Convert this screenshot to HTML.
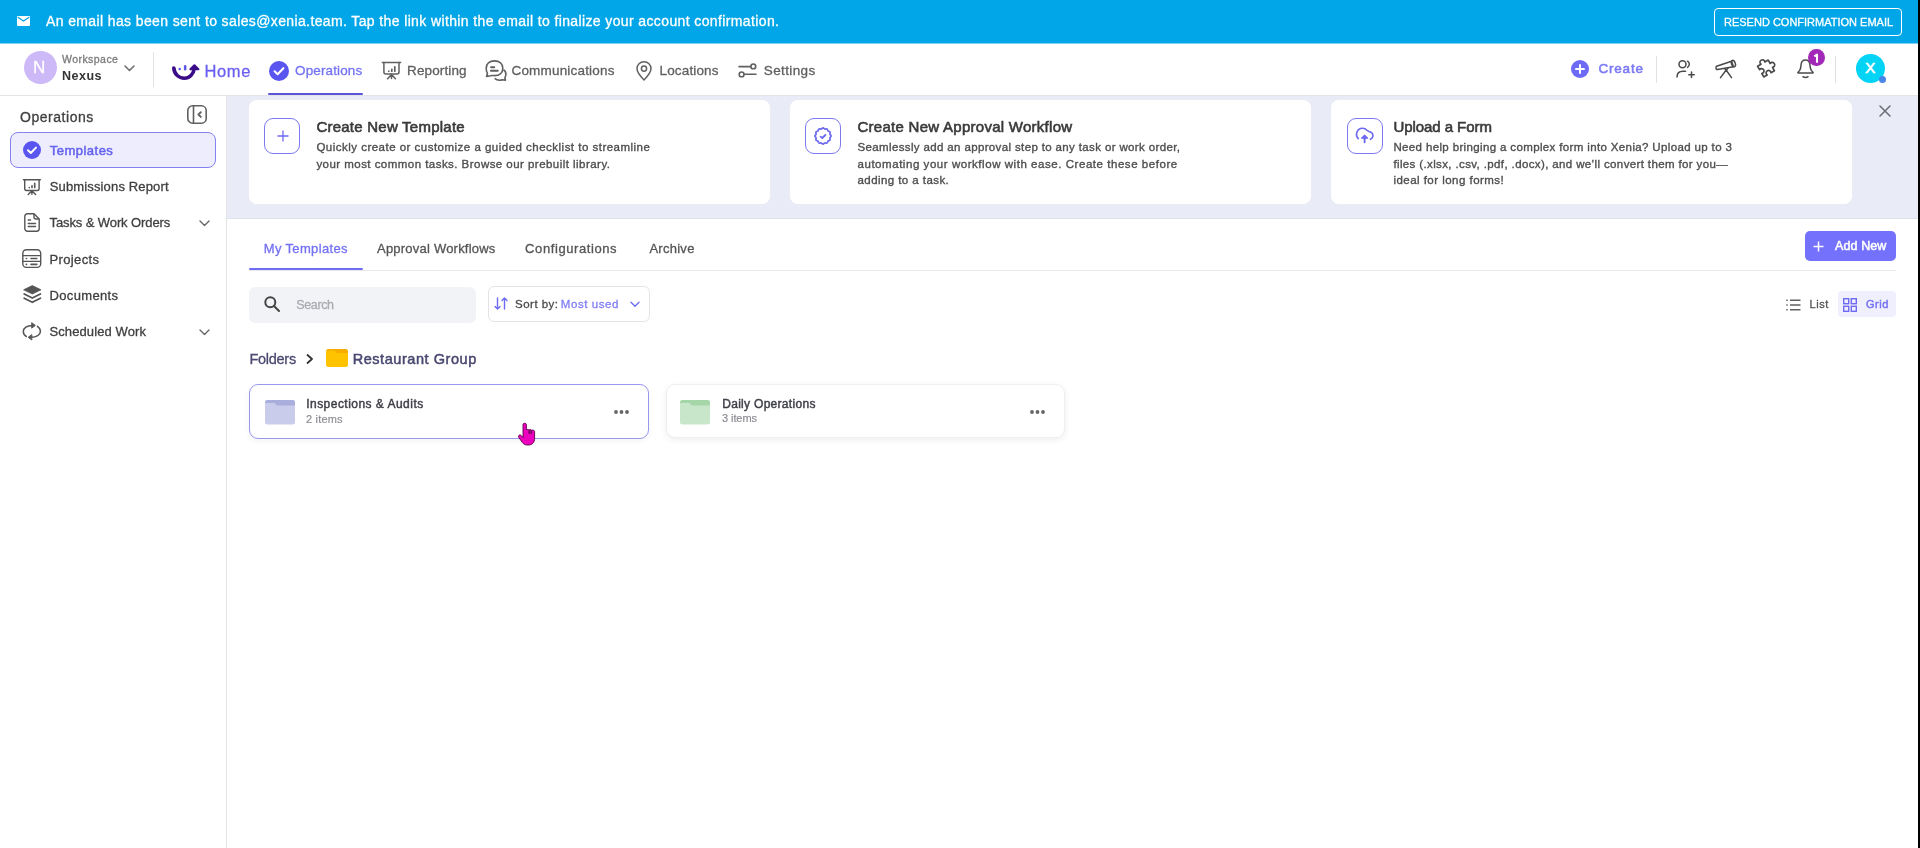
<!DOCTYPE html>
<html><head><meta charset="utf-8">
<style>
*{box-sizing:border-box;margin:0;padding:0}
html,body{width:1920px;height:848px;overflow:hidden;background:#fff;font-family:"Liberation Sans",sans-serif;}
.a{position:absolute}
.t{position:absolute;line-height:1;white-space:nowrap;-webkit-text-stroke:0.3px currentColor}
svg{position:absolute;overflow:visible}
#banner{left:0;top:0;width:1918px;height:44px;background:linear-gradient(#01A6E8 0,#01A6E8 43px,#80D2F3 43px)}
#strip{left:1918px;top:0;width:2px;height:848px;background:#000}
#header{left:0;top:43px;width:1918px;height:53px;background:#fff;border-bottom:1px solid #E4E4E6}
#sidebar{left:0;top:96px;width:227px;height:752px;background:#fff;border-right:1px solid #E4E4E6}
#topgray{left:227px;top:96px;width:1691px;height:123px;background:#E9ECF6;border-bottom:1px solid #DFE2EA}
.card{position:absolute;top:100px;height:104px;background:#fff;border-radius:8px}
.ibox{position:absolute;top:117.8px;width:36px;height:36px;border:1.5px solid #7D7AF0;border-radius:9px}
.ttl{font-size:15px;-webkit-text-stroke:0.6px currentColor;color:#3A3A3A;top:119px}
.desc{position:absolute;-webkit-text-stroke:0.35px currentColor;top:139.3px;font-size:11.5px;line-height:16.4px;color:#4E4E4E;white-space:nowrap;letter-spacing:0.45px}
.nav{font-size:13.5px;color:#606060;top:63.9px}
.side{font-size:13px;color:#404040}
.tab{font-size:13px;color:#555;top:241.8px}
</style></head>
<body>
<div id="root" style="position:absolute;left:0;top:0;width:1920px;height:848px;filter:blur(0.4px)">
<div class="a" id="header"></div>
<div class="a" id="banner"></div>
<div class="a" id="sidebar"></div>
<div class="a" id="topgray"></div>
<div class="a" id="strip"></div>

<!-- banner -->
<svg style="left:17px;top:16px" width="13" height="10" viewBox="0 0 13 10"><rect x="0" y="0" width="13" height="10" rx="1" fill="#fff"/><path d="M0.8 1.2 L6.5 5 L12.2 1.2" stroke="#01A6E8" stroke-width="1.3" fill="none"/></svg>
<div class="t" style="left:46px;top:13.7px;font-size:14px;letter-spacing:0.378px;color:#fff">An email has been sent to sales@xenia.team. Tap the link within the email to finalize your account confirmation.</div>
<div class="a" style="left:1714px;top:8px;width:188px;height:28px;border:1px solid #fff;border-radius:4px"></div>
<div class="t" style="left:1724px;top:16.5px;font-size:11px;color:#fff">RESEND CONFIRMATION EMAIL</div>

<!-- header -->
<div class="a" style="left:24px;top:51px;width:33px;height:33px;border-radius:50%;background:#CDB8F8"></div>
<div class="t" style="left:33px;top:58.5px;font-size:17px;color:#fff">N</div>
<div class="t" style="left:62px;top:54px;font-size:10.5px;letter-spacing:0.45px;color:#7A7A7A">Workspace</div>
<div class="t" style="left:62px;top:69.5px;font-size:12.5px;font-weight:700;-webkit-text-stroke:0;letter-spacing:0.5px;color:#333">Nexus</div>
<svg style="left:124px;top:64.5px" width="11" height="7" viewBox="0 0 11 7"><path d="M1 1 L5.5 5.5 L10 1" stroke="#707070" stroke-width="1.6" fill="none" stroke-linecap="round" stroke-linejoin="round"/></svg>
<div class="a" style="left:153px;top:52px;width:1px;height:35px;background:#E2E2E6"></div>
<!-- home logo -->
<svg style="left:166px;top:58px" width="40" height="28" viewBox="0 0 40 28"><path d="M7.8 10 C8.3 16.5 13 20.2 18.3 20.2 C23.5 20.2 27.5 16.2 28.3 10.5" stroke="#3A0C88" stroke-width="3.6" fill="none" stroke-linecap="round"/><path d="M28.4 7.2 L24.4 11.3 L32.4 11.3 Z" fill="#3A0C88" stroke="#3A0C88" stroke-width="2" stroke-linejoin="round"/><circle cx="13.7" cy="11" r="1.3" fill="#5B5BF2"/><rect x="17.9" y="7" width="2.5" height="5.6" rx="1.25" fill="#5E58E6"/></svg>
<div class="t" style="left:204.5px;top:63.2px;font-size:16.5px;letter-spacing:0.6px;color:#6A5FF2">Home</div>
<!-- operations -->
<svg style="left:269px;top:61px" width="20" height="20" viewBox="0 0 20 20"><circle cx="10" cy="10" r="10" fill="#5B55F0"/><path d="M5.6 10.3 L8.6 13.2 L14.4 7.2" stroke="#fff" stroke-width="2.1" fill="none" stroke-linecap="round" stroke-linejoin="round"/></svg>
<div class="t nav" style="left:295px;letter-spacing:0.13px;color:#7473F2">Operations</div>
<div class="a" style="left:268px;top:92.5px;width:95px;height:2.5px;background:#5A55D8;border-radius:1.5px"></div>
<!-- reporting -->
<svg style="left:382px;top:62px" width="19" height="18" viewBox="0 0 19 18" fill="none" stroke="#606060" stroke-width="1.5" stroke-linecap="round" stroke-linejoin="round"><path d="M0.4 0.6 H18.6"/><path d="M1.9 0.6 V10 C1.9 11.3 2.6 12 3.9 12 H15 C16.3 12 17 11.3 17 10 V0.6"/><path d="M6.8 9.2 V9.1 M9.8 9.2 V7.3 M12.8 9.2 V4.8" stroke-width="1.7"/><path d="M9.5 12.4 L5.6 16.8 M9.5 12.4 L13.4 16.8 M9.5 12.4 V16.5"/></svg>
<div class="t nav" style="left:407px;letter-spacing:0.13px">Reporting</div>
<!-- communications -->
<svg style="left:485px;top:60px" width="22" height="21" viewBox="0 0 22 21" fill="none" stroke="#606060" stroke-width="1.6" stroke-linejoin="round"><path d="M9.5 0.9 C14.5 0.9 17.8 3.7 17.8 8.2 C17.8 12.7 14.5 15.6 9.5 15.6 C8 15.6 6.6 15.4 5.6 15.7 L1.6 16.4 L2.4 13.2 C1.5 12 1.2 10.2 1.2 8.2 C1.2 3.7 4.5 0.9 9.5 0.9 Z"/><path d="M6 7.3 H9.3 M5.9 10.8 H12.8" stroke-width="1.9" stroke-linecap="round"/><path d="M18.4 9.8 C20.2 10.8 20.9 12.3 20.9 14.2 C20.9 15.6 20.5 16.8 19.9 17.6 L20.4 20.2 L17.4 19.8 C16.5 20.1 15.6 20.3 14.5 20.3 C12.6 20.3 10.9 19.6 9.7 18.4"/></svg>
<div class="t nav" style="left:511.5px;letter-spacing:0.18px">Communications</div>
<!-- locations -->
<svg style="left:636px;top:61px" width="16" height="20" viewBox="0 0 16 20" fill="none" stroke="#606060" stroke-width="1.5" stroke-linejoin="round"><path d="M8 19 C8 19 1 12 1 7.6 C1 3.6 4.1 0.8 8 0.8 C11.9 0.8 15 3.6 15 7.6 C15 12 8 19 8 19 Z"/><circle cx="8" cy="7.6" r="2.6"/></svg>
<div class="t nav" style="left:659.6px;letter-spacing:0.13px">Locations</div>
<!-- settings -->
<svg style="left:738px;top:63px" width="19" height="15" viewBox="0 0 19 15" fill="none" stroke="#606060" stroke-width="1.6" stroke-linecap="round"><path d="M1 3.6 H12.5"/><circle cx="15.3" cy="3.4" r="2.4"/><path d="M6.5 11.2 H18"/><circle cx="3.6" cy="11.4" r="2.4"/></svg>
<div class="t nav" style="left:763.8px;letter-spacing:0.37px">Settings</div>
<!-- right header -->
<svg style="left:1571px;top:59.5px" width="18" height="18" viewBox="0 0 18 18"><circle cx="9" cy="9" r="9" fill="#6D6BF6"/><path d="M9 5 V13 M5 9 H13" stroke="#fff" stroke-width="2" stroke-linecap="round"/></svg>
<div class="t" style="left:1598.5px;top:61.6px;font-size:13.5px;-webkit-text-stroke:0.55px currentColor;letter-spacing:0.79px;color:#7B79F5">Create</div>
<div class="a" style="left:1656px;top:56px;width:1px;height:27px;background:#E2E2E6"></div>
<svg style="left:1676px;top:60px" width="20" height="18" viewBox="0 0 20 18" fill="none" stroke="#4A4A4A" stroke-width="1.5" stroke-linecap="round"><circle cx="6.5" cy="4.3" r="3.5"/><path d="M11.5 1.2 C12.8 2 13.3 3 13.3 4.3 C13.3 5.6 12.8 6.6 11.5 7.4"/><path d="M1 17 C1 13.5 2.8 11.3 7 11.3 H9.5"/><path d="M15.5 12 V17.5 M12.8 14.8 H18.2"/></svg>
<svg style="left:1714px;top:58px" width="24" height="22" viewBox="0 0 24 22" fill="none" stroke="#4A4A4A" stroke-width="1.5" stroke-linecap="round" stroke-linejoin="round"><path d="M2.6 8.2 L17.6 3.2 L19.4 8.8 L3.6 11.4 C2.6 11.5 2 10.9 2 10 C2 9.2 2.2 8.4 2.6 8.2 Z"/><ellipse cx="19.4" cy="5.6" rx="1.9" ry="3.3" transform="rotate(-18 19.4 5.6)"/><path d="M10.5 10.5 L12.3 12.3 L14 10"/><path d="M12 12.3 L6.5 19.6 M12.3 12.3 L17.5 19.6"/></svg>
<svg style="left:1756px;top:59px" width="20" height="19" viewBox="0 0 20 19" fill="none" stroke="#4A4A4A" stroke-width="1.5" stroke-linejoin="round"><g transform="translate(10 9.5) rotate(-30) scale(1.12) translate(-10 -9.5)"><path d="M4.5 4 H8 A2.2 2.2 0 1 1 12 4 H15.5 V7.5 A2.2 2.2 0 1 1 15.5 11.5 V15 H12 A2.2 2.2 0 1 0 8 15 H4.5 V11.5 A2.2 2.2 0 1 0 4.5 7.5 Z"/></g></svg>
<svg style="left:1796px;top:58px" width="19" height="21" viewBox="0 0 19 21" fill="none" stroke="#4A4A4A" stroke-width="1.5" stroke-linecap="round" stroke-linejoin="round"><path d="M9.5 2 C6.6 2 5.2 4.2 5 7.2 C4.8 10.5 4.2 12.5 2.2 14 C1.6 14.5 1.8 15 2.5 15 H16.5 C17.2 15 17.4 14.5 16.8 14 C14.8 12.5 14.2 10.5 14 7.2 C13.8 4.2 12.4 2 9.5 2 Z"/><path d="M7 18.8 C8.5 19.5 10.5 19.5 12 18.8"/></svg>
<div class="a" style="left:1808.2px;top:48.6px;width:17px;height:17.8px;border-radius:50%;background:#A228B8"></div>
<svg style="left:1808px;top:49px" width="17" height="18" viewBox="0 0 17 18"><path d="M6.3 7.3 L9 5.6 V13.8" stroke="#fff" stroke-width="2.1" fill="none" stroke-linejoin="round"/></svg>
<div class="a" style="left:1835px;top:56px;width:1px;height:27px;background:#E2E2E6"></div>
<div class="a" style="left:1855.6px;top:54px;width:29.4px;height:29.4px;border-radius:50%;background:#03D4F6"></div>
<div class="t" style="left:1865.2px;top:60.3px;font-size:15px;color:#fff;-webkit-text-stroke:0.6px #fff">X</div>
<div class="a" style="left:1879.2px;top:76px;width:7px;height:7px;border-radius:50%;background:#4A86E8"></div>

<!-- sidebar -->
<div class="t" style="left:20px;top:110.3px;font-size:14px;letter-spacing:0.54px;color:#3F3F3F">Operations</div>
<svg style="left:187px;top:105px" width="20" height="19" viewBox="0 0 20 19" fill="none" stroke="#606060" stroke-width="1.6"><rect x="0.8" y="0.8" width="18.4" height="17.4" rx="4.8"/><path d="M6.5 0.8 V18.2"/><path d="M13.8 7.2 L11.4 9.5 L13.8 11.9" stroke-width="1.9" stroke-linecap="round" stroke-linejoin="round"/></svg>
<div class="a" style="left:10px;top:132px;width:206px;height:36px;border:1px solid #8681EE;border-radius:8px;background:#EEEDFD"></div>
<svg style="left:23px;top:140.5px" width="18" height="18" viewBox="0 0 18 18"><circle cx="9" cy="9" r="9" fill="#5B55F0"/><path d="M5 9.3 L7.8 12 L13 6.6" stroke="#fff" stroke-width="2" fill="none" stroke-linecap="round" stroke-linejoin="round"/></svg>
<div class="t side" style="left:49.7px;top:144px;-webkit-text-stroke:0.5px currentColor;letter-spacing:0.49px;color:#6563EE">Templates</div>
<svg style="left:23px;top:178.5px" width="18" height="17" viewBox="0 0 18 17" fill="none" stroke="#555" stroke-width="1.4" stroke-linecap="round" stroke-linejoin="round"><path d="M0.4 0.7 H17.4"/><path d="M1.7 0.7 V9.6 C1.7 10.8 2.4 11.5 3.6 11.5 H14.2 C15.4 11.5 16.1 10.8 16.1 9.6 V0.7"/><path d="M6.3 8.6 V8.5 M9 8.6 V6.8 M11.7 8.6 V4.4" stroke-width="1.6"/><path d="M8.9 11.8 L5.2 15.6 M8.9 11.8 L12.6 15.6 M8.9 11.8 V15.3"/></svg>
<div class="t side" style="left:49.7px;top:180px;letter-spacing:0.15px">Submissions Report</div>
<svg style="left:24px;top:213px" width="16" height="19" viewBox="0 0 16 19" fill="none" stroke="#555" stroke-width="1.4" stroke-linejoin="round"><path d="M3.5 0.8 H10 L15.2 6 V15.5 C15.2 17 14.2 18.2 12.7 18.2 H3.5 C2 18.2 0.8 17 0.8 15.5 V3.5 C0.8 2 2 0.8 3.5 0.8 Z"/><path d="M10 0.8 V4 C10 5.2 10.8 6 12 6 H15.2"/><path d="M4.3 7 H6.5 M4.3 10.5 H11.5 M4.3 13.5 H11.5" stroke-linecap="round" stroke-width="1.5"/></svg>
<div class="t side" style="left:49.5px;top:215.9px;letter-spacing:-0.1px">Tasks &amp; Work Orders</div>
<svg style="left:198.5px;top:219.5px" width="11" height="7" viewBox="0 0 11 7"><path d="M1 1 L5.5 5.5 L10 1" stroke="#666" stroke-width="1.4" fill="none" stroke-linecap="round" stroke-linejoin="round"/></svg>
<svg style="left:22px;top:249px" width="20" height="19" viewBox="0 0 20 19" fill="none" stroke="#555" stroke-width="1.4"><rect x="0.8" y="0.8" width="17.9" height="17.6" rx="3.6"/><path d="M0.8 6.6 H18.7 M0.8 12.4 H18.7"/><path d="M4.3 9.5 H4.6 M4.3 15.4 H4.6 M9 9.5 H14.8 M9 15.4 H14.8" stroke-linecap="round" stroke-width="1.6"/></svg>
<div class="t side" style="left:49.5px;top:252.7px;letter-spacing:0.36px">Projects</div>
<svg style="left:22.5px;top:284.5px" width="19" height="19" viewBox="0 0 19 19"><path d="M9.3 0.6 L18 4.8 L9.3 9 L0.6 4.8 Z" fill="#555" stroke="#555" stroke-width="0.8" stroke-linejoin="round"/><path d="M1.2 9 L9.3 13 L17.4 9" stroke="#555" stroke-width="1.8" fill="none" stroke-linejoin="round" stroke-linecap="round"/><path d="M1.2 13.2 L9.3 17.3 L17.4 13.2" stroke="#555" stroke-width="1.8" fill="none" stroke-linejoin="round" stroke-linecap="round"/></svg>
<div class="t side" style="left:49.5px;top:289px;letter-spacing:0.34px">Documents</div>
<svg style="left:22px;top:322px" width="20" height="19" viewBox="0 0 20 19" fill="none" stroke="#555" stroke-width="1.5" stroke-linecap="round"><path d="M10.2 3.4 C5.2 3.4 1.3 6 1.3 9.4 C1.3 11.6 2.5 13.4 4.3 14.5"/><path d="M9.3 15.3 C14.3 15.3 18.4 12.8 18.4 9.4 C18.4 7.2 17.2 5.4 15.4 4.3"/><path d="M10 0.9 L13.3 3.4 L10 5.9 Z" fill="#555" stroke-width="1" stroke-linejoin="round"/><path d="M9.5 12.8 L6.2 15.3 L9.5 17.8 Z" fill="#555" stroke-width="1" stroke-linejoin="round"/></svg>
<div class="t side" style="left:49.5px;top:325.2px;letter-spacing:0.1px">Scheduled Work</div>
<svg style="left:198.5px;top:328.5px" width="11" height="7" viewBox="0 0 11 7"><path d="M1 1 L5.5 5.5 L10 1" stroke="#666" stroke-width="1.4" fill="none" stroke-linecap="round" stroke-linejoin="round"/></svg>

<!-- top cards -->
<div class="card" style="left:249px;width:521px"></div>
<div class="card" style="left:790px;width:521px"></div>
<div class="card" style="left:1331px;width:521px"></div>
<div class="ibox" style="left:264px"></div>
<svg style="left:276.5px;top:129.5px" width="12" height="12" viewBox="0 0 12 12"><path d="M6 0.5 V11.5 M0.5 6 H11.5" stroke="#6C69EE" stroke-width="1.3"/></svg>
<div class="t ttl" style="left:316.4px;letter-spacing:0.24px">Create New Template</div>
<div class="desc" style="left:316.4px"><span style="letter-spacing:0.485px">Quickly create or customize a guided checklist to streamline</span><br><span style="letter-spacing:0.459px">your most common tasks. Browse our prebuilt library.</span></div>
<div class="ibox" style="left:805px"></div>
<svg style="left:814px;top:126.8px" width="18" height="18" viewBox="0 0 18 18" fill="none" stroke="#6C69EE" stroke-linecap="round" stroke-linejoin="round"><path d="M17.05 9.00 L16.95 9.42 L16.70 9.81 L16.37 10.17 L16.08 10.50 L15.91 10.85 L15.88 11.24 L15.97 11.67 L16.07 12.15 L16.10 12.62 L15.97 13.02 L15.68 13.34 L15.26 13.55 L14.80 13.70 L14.38 13.84 L14.06 14.06 L13.84 14.38 L13.70 14.80 L13.55 15.26 L13.34 15.68 L13.03 15.97 L12.62 16.10 L12.15 16.07 L11.67 15.97 L11.24 15.88 L10.85 15.91 L10.50 16.08 L10.17 16.37 L9.81 16.70 L9.42 16.95 L9.00 17.05 L8.58 16.95 L8.19 16.70 L7.83 16.37 L7.50 16.08 L7.15 15.91 L6.76 15.88 L6.33 15.97 L5.85 16.07 L5.38 16.10 L4.98 15.97 L4.66 15.68 L4.45 15.26 L4.30 14.80 L4.16 14.38 L3.94 14.06 L3.62 13.84 L3.20 13.70 L2.74 13.55 L2.32 13.34 L2.03 13.02 L1.90 12.62 L1.93 12.15 L2.03 11.67 L2.12 11.24 L2.09 10.85 L1.92 10.50 L1.63 10.17 L1.30 9.81 L1.05 9.42 L0.95 9.00 L1.05 8.58 L1.30 8.19 L1.63 7.83 L1.92 7.50 L2.09 7.15 L2.12 6.76 L2.03 6.33 L1.93 5.85 L1.90 5.38 L2.03 4.98 L2.32 4.66 L2.74 4.45 L3.20 4.30 L3.62 4.16 L3.94 3.94 L4.16 3.62 L4.30 3.20 L4.45 2.74 L4.66 2.32 L4.97 2.03 L5.38 1.90 L5.85 1.93 L6.33 2.03 L6.76 2.12 L7.15 2.09 L7.50 1.92 L7.83 1.63 L8.19 1.30 L8.58 1.05 L9.00 0.95 L9.42 1.05 L9.81 1.30 L10.17 1.63 L10.50 1.92 L10.85 2.09 L11.24 2.12 L11.67 2.03 L12.15 1.93 L12.62 1.90 L13.03 2.03 L13.34 2.32 L13.55 2.74 L13.70 3.20 L13.84 3.62 L14.06 3.94 L14.38 4.16 L14.80 4.30 L15.26 4.45 L15.68 4.66 L15.97 4.98 L16.10 5.38 L16.07 5.85 L15.97 6.33 L15.88 6.76 L15.91 7.15 L16.08 7.50 L16.37 7.83 L16.70 8.19 L16.95 8.58 Z" stroke-width="1.7"/><path d="M6.6 9.6 L8.3 11 L11.4 8" stroke-width="1.8"/></svg>
<div class="t ttl" style="left:857.5px;letter-spacing:0.27px">Create New Approval Workflow</div>
<div class="desc" style="left:857.5px"><span style="letter-spacing:0.363px">Seamlessly add an approval step to any task or work order,</span><br><span style="letter-spacing:0.546px">automating your workflow with ease. Create these before</span><br><span style="letter-spacing:0.431px">adding to a task.</span></div>
<div class="ibox" style="left:1346.5px"></div>
<svg style="left:1355px;top:127px" width="20" height="17" viewBox="0 0 20 17" fill="none" stroke="#6C69EE" stroke-linecap="round" stroke-linejoin="round"><path d="M3.3 11.6 C1.8 10.4 1.2 8.5 1.6 6.5 C2.2 3.4 4.7 1.3 7.6 1.3 C9.4 1.3 10.9 2.1 11.9 3.3 C12.5 3.9 13.4 4.1 14.3 4.5 C16.6 5.3 18.3 7.2 17.9 9.4 C17.7 10.6 16.8 11.6 15.4 12.2" stroke-width="1.6"/><path d="M6.6 11.2 L9.6 8.2 L12.6 11.2 Z" fill="#6C69EE" stroke-width="1.2"/><path d="M9.6 10.5 V15.3" stroke-width="1.9"/></svg>
<div class="t ttl" style="left:1393.4px;letter-spacing:-0.06px">Upload a Form</div>
<div class="desc" style="left:1393.4px"><span style="letter-spacing:0.363px">Need help bringing a complex form into Xenia? Upload up to 3</span><br><span style="letter-spacing:0.375px">files (.xlsx, .csv, .pdf, .docx), and we’ll convert them for you—</span><br><span style="letter-spacing:0.47px">ideal for long forms!</span></div>
<svg style="left:1878.5px;top:105px" width="12" height="12" viewBox="0 0 12 12"><path d="M1 1 L11 11 M11 1 L1 11" stroke="#6A6A72" stroke-width="1.5" stroke-linecap="round"/></svg>

<!-- tabs -->
<div class="t tab" style="left:263.8px;letter-spacing:0.34px;color:#7471F3">My Templates</div>
<div class="t tab" style="left:377px;letter-spacing:0.22px">Approval Workflows</div>
<div class="t tab" style="left:525.1px;letter-spacing:0.59px">Configurations</div>
<div class="t tab" style="left:649.4px;letter-spacing:0.27px">Archive</div>
<div class="a" style="left:249px;top:270px;width:1647px;height:1px;background:#E8E8EC"></div>
<div class="a" style="left:249px;top:267.8px;width:114px;height:2.6px;background:#6F6CF5;border-radius:1px"></div>
<div class="a" style="left:1805px;top:231px;width:91px;height:29.5px;background:#7472FC;border-radius:5px"></div>
<svg style="left:1813px;top:240.5px" width="11" height="11" viewBox="0 0 11 11"><path d="M5.5 0.5 V10.5 M0.5 5.5 H10.5" stroke="#fff" stroke-width="1.5"/></svg>
<div class="t" style="left:1835px;top:240.1px;font-size:12.5px;-webkit-text-stroke:0.5px currentColor;letter-spacing:0.11px;color:#fff">Add New</div>
<!-- search -->
<div class="a" style="left:249px;top:287px;width:227px;height:35.5px;background:#F2F3F6;border-radius:6px"></div>
<svg style="left:264px;top:295.5px" width="16" height="16" viewBox="0 0 16 16" fill="none" stroke="#444" stroke-width="2" stroke-linecap="round"><circle cx="6.3" cy="6.3" r="5"/><path d="M10.2 10.2 L15 15"/></svg>
<div class="t" style="left:296.3px;top:298.8px;font-size:12.5px;letter-spacing:-0.38px;color:#ABABB2">Search</div>
<div class="a" style="left:487.5px;top:286.3px;width:162.5px;height:35.7px;border:1px solid #E3E3E8;border-radius:6px"></div>
<svg style="left:494px;top:297px" width="14" height="13" viewBox="0 0 14 13" fill="none" stroke="#6E6BF2" stroke-width="1.4" stroke-linecap="round" stroke-linejoin="round"><path d="M3.5 1 V12 M1 9.5 L3.5 12 L6 9.5"/><path d="M10.5 12 V1 M8 3.5 L10.5 1 L13 3.5"/></svg>
<div class="t" style="left:515.1px;top:298.7px;font-size:11.5px;letter-spacing:0.47px;color:#4A4A4A">Sort by:</div>
<div class="t" style="left:560.8px;top:298.7px;font-size:11.5px;letter-spacing:0.58px;color:#807DF5">Most used</div>
<svg style="left:629.5px;top:301px" width="10" height="7" viewBox="0 0 10 7"><path d="M1 1.2 L5 5.2 L9 1.2" stroke="#6E6BF2" stroke-width="1.4" fill="none" stroke-linecap="round" stroke-linejoin="round"/></svg>
<!-- list/grid -->
<svg style="left:1785.5px;top:298.5px" width="15" height="12" viewBox="0 0 15 12" fill="none" stroke="#606060" stroke-width="1.6"><path d="M0.3 1.2 H1.7 M0.3 6 H1.7 M0.3 10.8 H1.7"/><path d="M4 1.2 H14.5 M4 6 H14.5 M4 10.8 H14.5"/></svg>
<div class="t" style="left:1809.6px;top:299.2px;font-size:11px;letter-spacing:0.49px;color:#555">List</div>
<div class="a" style="left:1837.5px;top:291px;width:58.5px;height:25.5px;background:#EFEFFD;border-radius:4px"></div>
<svg style="left:1843px;top:298px" width="14" height="14" viewBox="0 0 14 14" fill="none" stroke="#6E6BF2" stroke-width="1.4"><rect x="0.7" y="0.7" width="5" height="5"/><rect x="8.3" y="0.7" width="5" height="5"/><rect x="0.7" y="8.3" width="5" height="5"/><rect x="8.3" y="8.3" width="5" height="5"/></svg>
<div class="t" style="left:1866px;top:299.2px;font-size:11px;-webkit-text-stroke:0.45px currentColor;letter-spacing:0.5px;color:#7572F2">Grid</div>
<!-- breadcrumb -->
<div class="t" style="left:249.4px;top:351.5px;font-size:14.5px;letter-spacing:-0.26px;color:#4A4870">Folders</div>
<svg style="left:306px;top:353.5px" width="8" height="10" viewBox="0 0 8 10"><path d="M1.5 1 L6 5 L1.5 9" stroke="#333" stroke-width="1.8" fill="none" stroke-linecap="round" stroke-linejoin="round"/></svg>
<svg style="left:325.5px;top:349px" width="22" height="18" viewBox="0 0 22 18"><rect x="0" y="0" width="22" height="18" rx="2.5" fill="#FFC300"/><path d="M0 3 C0 1.3 1.3 0 3 0 H19 C20.7 0 22 1.3 22 3 V4 H11 L8.5 1.5 H0 Z" fill="#F5A300" opacity="0.7"/></svg>
<div class="t" style="left:352.7px;top:351.5px;font-size:14.5px;-webkit-text-stroke:0.5px currentColor;letter-spacing:0.55px;color:#4A4870">Restaurant Group</div>
<!-- folder cards -->
<div class="a" style="left:665.5px;top:384px;width:399.5px;height:54px;background:#fff;border:1px solid #EEEEF3;border-radius:9px;box-shadow:0 2px 6px rgba(0,0,0,0.07)"></div>
<div class="a" style="left:249px;top:384px;width:400px;height:54.5px;background:#fff;border:1.5px solid #9A96EE;border-radius:9px;box-shadow:0 2px 6px rgba(0,0,0,0.05)"></div>
<svg style="left:265px;top:399.5px" width="30" height="24.5" viewBox="0 0 30 24.5"><rect x="0" y="0" width="30" height="24.5" rx="2.5" fill="#C9CCEA"/><path d="M0 2.5 C0 1.1 1.1 0 2.5 0 H27.5 C28.9 0 30 1.1 30 2.5 V5.5 H12 L9.5 3 H0 Z" fill="#A9AEDD"/></svg>
<div class="t" style="left:306.2px;top:398.2px;font-size:12px;-webkit-text-stroke:0.45px currentColor;letter-spacing:0.47px;color:#3F3F48">Inspections &amp; Audits</div>
<div class="t" style="left:306px;top:413.6px;font-size:11px;letter-spacing:0.19px;color:#8A8A92;-webkit-text-stroke:0.15px currentColor">2 items</div>
<svg style="left:614px;top:410px" width="15" height="4" viewBox="0 0 15 4"><circle cx="2" cy="2" r="1.9" fill="#666"/><circle cx="7.5" cy="2" r="1.9" fill="#666"/><circle cx="13" cy="2" r="1.9" fill="#666"/></svg>
<svg style="left:680px;top:399.5px" width="30" height="24.5" viewBox="0 0 30 24.5"><rect x="0" y="0" width="30" height="24.5" rx="2.5" fill="#C8E6C9"/><path d="M0 2.5 C0 1.1 1.1 0 2.5 0 H27.5 C28.9 0 30 1.1 30 2.5 V5.5 H12 L9.5 3 H0 Z" fill="#A5D6A7"/></svg>
<div class="t" style="left:722.2px;top:398.1px;font-size:12px;-webkit-text-stroke:0.45px currentColor;letter-spacing:0.3px;color:#3F3F48">Daily Operations</div>
<div class="t" style="left:722px;top:413.4px;font-size:11px;letter-spacing:-0.08px;color:#8A8A92;-webkit-text-stroke:0.15px currentColor">3 items</div>
<svg style="left:1029.5px;top:410px" width="15" height="4" viewBox="0 0 15 4"><circle cx="2" cy="2" r="1.9" fill="#666"/><circle cx="7.5" cy="2" r="1.9" fill="#666"/><circle cx="13" cy="2" r="1.9" fill="#666"/></svg>
<!-- cursor -->
<svg style="left:518px;top:423px" width="18" height="23" viewBox="0 0 18 23"><path d="M5 1.6 C5 0.8 5.7 0.3 6.7 0.3 C7.7 0.3 8.4 0.8 8.4 1.6 V6.8 C9.2 6.3 10.4 6.3 11 6.9 C11.7 6.4 13 6.5 13.5 7.2 C14.5 6.8 16.6 7.2 16.6 8.6 V15.5 C16.6 19.2 14.3 22 10.6 22 H9.2 C7 22 5.5 21.1 4.4 19.6 L0.7 14.3 C0.2 13.5 0.5 12.5 1.3 12.1 C2.1 11.7 3 12 3.5 12.7 L5 14.6 Z" fill="#EC00BE" stroke="#5A0048" stroke-width="0.9"/><rect x="10.6" y="7.4" width="3.2" height="3.4" fill="#8A0072" opacity="0.75"/><path d="M11 7.2 V10.8 M13.5 7.5 V10.8" stroke="#5A0048" stroke-width="0.8"/></svg>

</div>
</body></html>
